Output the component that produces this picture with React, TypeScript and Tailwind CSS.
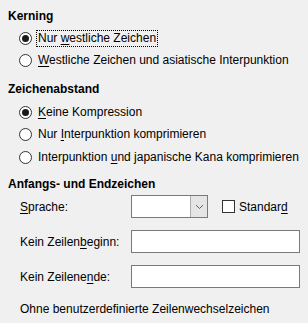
import React from 'react';

function U({ children }: { children: React.ReactNode }) {
    return <span className="underline underline-offset-2">{children}</span>;
}

function Radio({ checked, children, focus }: { checked?: boolean; children: React.ReactNode; focus?: boolean }) {
    return (
        <div className="flex items-center h-[22px] pl-[11px]">
            <span className="w-[13px] h-[13px] rounded-full border border-[#333333] bg-white flex items-center justify-center shrink-0">
                {checked && <span className="w-[7px] h-[7px] rounded-full bg-[#1a1a1a]" />}
            </span>
            <span className={`ml-[5px] px-[1px] leading-[15px] ${focus ? 'outline outline-1 outline-dotted outline-black' : ''}`}>
                {children}
            </span>
        </div>
    );
}

function Field({ label }: { label: React.ReactNode }) {
    return (
        <div className="flex items-center h-[23px] pl-[12px]">
            <span className="w-[111px]">{label}</span>
            <div className="w-[170px] h-[23px] border border-[#7a7a7a] bg-white" />
        </div>
    );
}

export default function App() {
    return (
        <div
            className="w-[308px] h-[323px] bg-[#f0f0f0] text-black text-[12px] px-[8px] pt-[8px] overflow-hidden"
            style={{ fontFamily: '"Liberation Sans", Arial, sans-serif' }}
        >
            {/* Kerning */}
            <div className="h-[16px] leading-[16px] font-bold">Kerning</div>
            <div className="mt-[3px]">
                <Radio checked focus>Nur <U>w</U>estliche Zeichen</Radio>
                <Radio><U>W</U>estliche Zeichen und asiatische Interpunktion</Radio>
            </div>

            {/* Zeichenabstand */}
            <div className="mt-[10px] h-[16px] leading-[16px] font-bold">Zeichenabstand</div>
            <div className="mt-[4px]">
                <Radio checked><U>K</U>eine Kompression</Radio>
                <Radio>Nur <U>I</U>nterpunktion komprimieren</Radio>
                <div className="mt-[1px]">
                    <Radio>Interpunktion <U>u</U>nd japanische Kana komprimieren</Radio>
                </div>
            </div>

            {/* Anfangs- und Endzeichen */}
            <div className="mt-[8px] h-[16px] leading-[16px] font-bold">Anfangs- und Endzeichen</div>
            <div className="mt-[3px] flex items-center h-[23px] pl-[12px]">
                <span className="w-[111px]"><U>S</U>prache:</span>
                <div className="w-[77px] h-[23px] border border-[#7a7a7a] bg-white flex">
                    <div className="flex-1" />
                    <div className="w-[17px] h-full bg-[#e5e5e5] border-l border-[#acacac] flex items-center justify-center">
                        <svg width="9" height="6" viewBox="0 0 9 6">
                            <path d="M1 1 L4.5 4.5 L8 1" fill="none" stroke="#606060" strokeWidth="1" />
                        </svg>
                    </div>
                </div>
                <span className="ml-[14px] w-[13px] h-[13px] border border-[#333333] bg-white" />
                <span className="ml-[4px]">Standar<U>d</U></span>
            </div>
            <div className="mt-[12px]">
                <Field label={<>Kein Zeilen<U>b</U>eginn:</>} />
            </div>
            <div className="mt-[12px]">
                <Field label={<>Kein Zeilene<U>n</U>de:</>} />
            </div>
            <div className="mt-[13px] pl-[12px] h-[16px] leading-[16px]">
                Ohne benutzerdefinierte Zeilenwechselzeichen
            </div>
        </div>
    );
}
